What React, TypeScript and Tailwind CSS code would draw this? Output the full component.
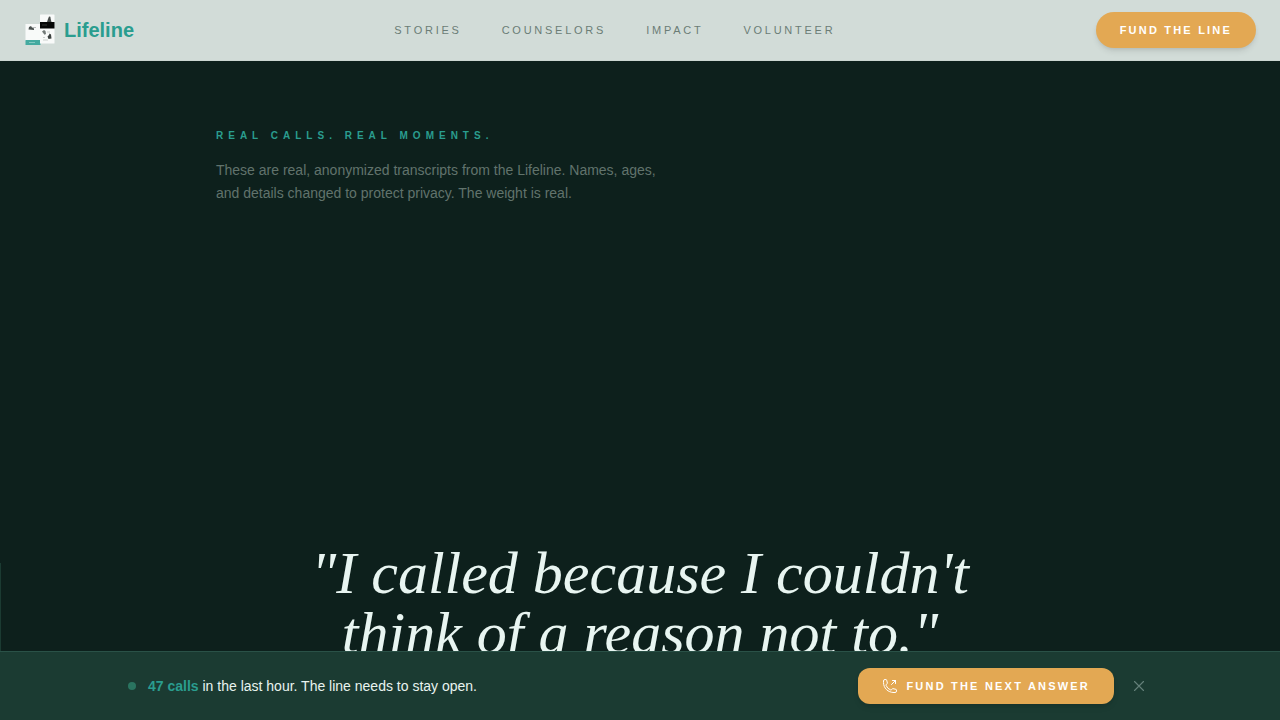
import { HiOutlinePhoneArrowUpRight, HiOutlineXMark } from 'react-icons/hi2';

const navLinks = [
  { label: 'Stories', href: '#stories' },
  { label: 'Counselors', href: '#counselors' },
  { label: 'Impact', href: '#impact' },
  { label: 'Volunteer', href: '#volunteer' },
];

function LogoMark() {
  return (
    <svg viewBox="0 0 32 32" className="w-8 h-8 shrink-0" aria-hidden="true">
      {/* Cards */}
      <rect x="1.5" y="10" width="15" height="17" fill="#f8faf9" />
      <rect x="1.5" y="26" width="15" height="5" fill="#45aaa0" />
      <path d="M5 28.5h6" stroke="#83c9c2" strokeWidth="1" />
      <rect x="16" y="0.5" width="14.5" height="29" rx="0.6" fill="#f8faf9" />
      <rect x="16" y="8" width="14.5" height="6.5" fill="#050706" />
      <path d="M18 11h5" stroke="#3b403e" strokeWidth="0.8" />
      {/* Figures */}
      <path d="M4.5 15.5l.5-2.5 2-1 1 1.5 2 1v1.5z" fill="#4b5250" />
      <path d="M8 13.5h4" stroke="#a9afad" strokeWidth="0.8" />
      <path d="M23 8l1-3 1-2.500 1.400.2.300 2.300.800 3z" fill="#464c4a" />
      <path d="M18 17.5l2-1.500 1.500 1 .500 3-1.500.8z" fill="#737b78" />
      <path d="M23.500 22.500l1.500-1.500.5-1.500 1.500 1 .5 4-3 .5z" fill="#3b413f" />
      <path d="M19 23.500h2M19 26h5M23 18h3" stroke="#c0c6c3" strokeWidth="0.8" />
    </svg>
  );
}

function Header() {
  return (
    <header className="shrink-0 flex items-center justify-between px-6 py-3 bg-[#d2dcd8] border-b border-[#cbd6d1]">
      <a href="#top" className="flex items-center gap-2 text-xl font-bold text-[#2a9d8f]">
        <LogoMark />
        Lifeline
      </a>
      <nav className="flex items-center gap-10">
        {navLinks.map((link) => (
          <a key={link.href} href={link.href} className="text-[11px] tracking-[0.25em] uppercase text-[#6b7c76]">
            {link.label}
          </a>
        ))}
      </nav>
      <button className="h-9 px-6 rounded-full bg-[#e3a853] text-white text-[11px] font-bold tracking-[0.2em] uppercase shadow-md">
        Fund the line
      </button>
    </header>
  );
}

function CallBar() {
  return (
    <div className="shrink-0 bg-[#1b3b32] border-t border-[#2a5147]">
      <div className="max-w-5xl mx-auto py-4 flex items-center justify-between">
        <div className="flex items-center gap-3">
          <span className="w-2 h-2 rounded-full bg-[#2a7460]" />
          <p className="text-sm text-[#e8f3ef]">
            <strong className="font-bold text-[#2a9d8f]">47 calls</strong> in the last hour. The line needs to stay open.
          </p>
        </div>
        <div className="flex items-center gap-3">
          <button className="h-9 px-6 flex items-center gap-2 rounded-xl bg-[#e3a853] text-white text-[11px] font-bold tracking-[0.2em] uppercase shadow-md">
            <HiOutlinePhoneArrowUpRight className="w-4 h-4" />
            Fund the next answer
          </button>
          <button aria-label="Dismiss" className="p-1 text-[#64817a]">
            <HiOutlineXMark className="w-[18px] h-[18px]" />
          </button>
        </div>
      </div>
    </div>
  );
}

export default function App() {
  return (
    <div id="top" className="h-screen flex flex-col bg-[#0d201c] font-['Liberation_Sans',Arial,sans-serif]">
      <Header />

      <main className="flex-1 min-h-0 overflow-hidden">
        {/* Intro */}
        <section id="stories" className="max-w-4xl mx-auto px-6 py-16">
          <h2 className="mb-3 text-[10px] leading-[22px] font-bold tracking-[0.5em] uppercase text-[#2a9d8f]">
            Real calls. Real moments.
          </h2>
          <p className="max-w-md text-sm leading-[23px] text-[#61736c]">
            These are real, anonymized transcripts from the Lifeline. Names, ages, and details changed to protect privacy. The weight is real.
          </p>
        </section>

        {/* Opening quote */}
        <section className="pt-[274px]">
          <div className="relative">
            <span className="absolute left-0 top-5 bottom-0 w-px bg-[#1b3b32]" />
            <blockquote className="max-w-3xl mx-auto text-center text-6xl leading-[60px] italic text-[#e8f5f1] font-['Liberation_Serif','Times_New_Roman',serif]">
              "I called because I couldn't think of a reason not to."
            </blockquote>
          </div>
        </section>
      </main>

      <CallBar />
    </div>
  );
}
